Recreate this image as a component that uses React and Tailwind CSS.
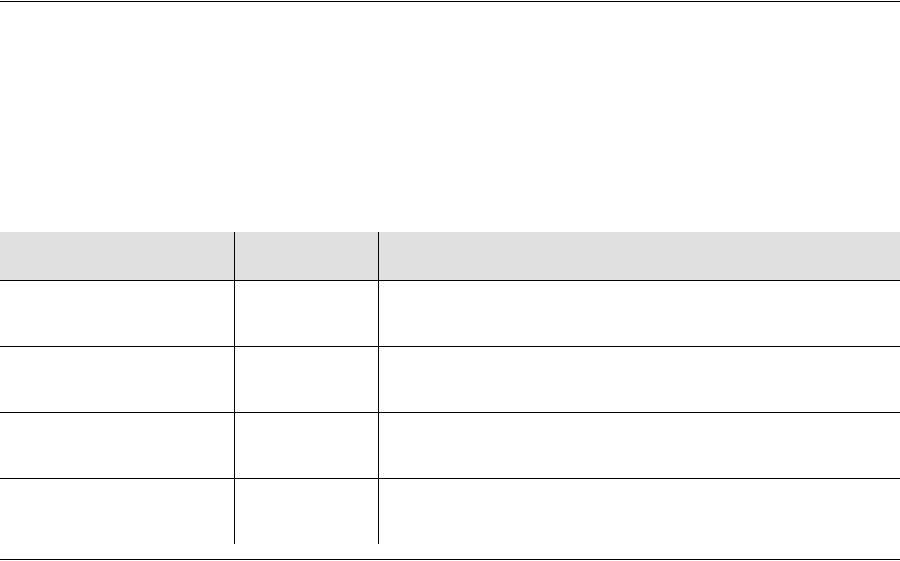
const rows = [0, 1, 2, 3];

const Row = ({ header, last }) => (
  <div
    className={`flex ${header ? 'h-[49px] bg-[#e0e0e0] border-b border-black' : last ? 'h-[65px]' : 'h-[66px] border-b border-black'}`}
  >
    <div className="w-[235px] border-r border-black" />
    <div className="w-[144px] border-r border-black" />
    <div className="flex-1" />
  </div>
);

const App = () => {
  return (
    <div className="w-[900px] h-[561px] bg-white font-['Liberation_Sans',sans-serif]">
      <div className="h-px" />
      <div className="h-px bg-black" />
      <div className="h-[230px]" />
      <Row header />
      {rows.map((r) => (
        <Row key={r} last={r === rows.length - 1} />
      ))}
      <div className="h-[15px]" />
      <div className="h-px bg-black" />
    </div>
  );
};

export default App;
